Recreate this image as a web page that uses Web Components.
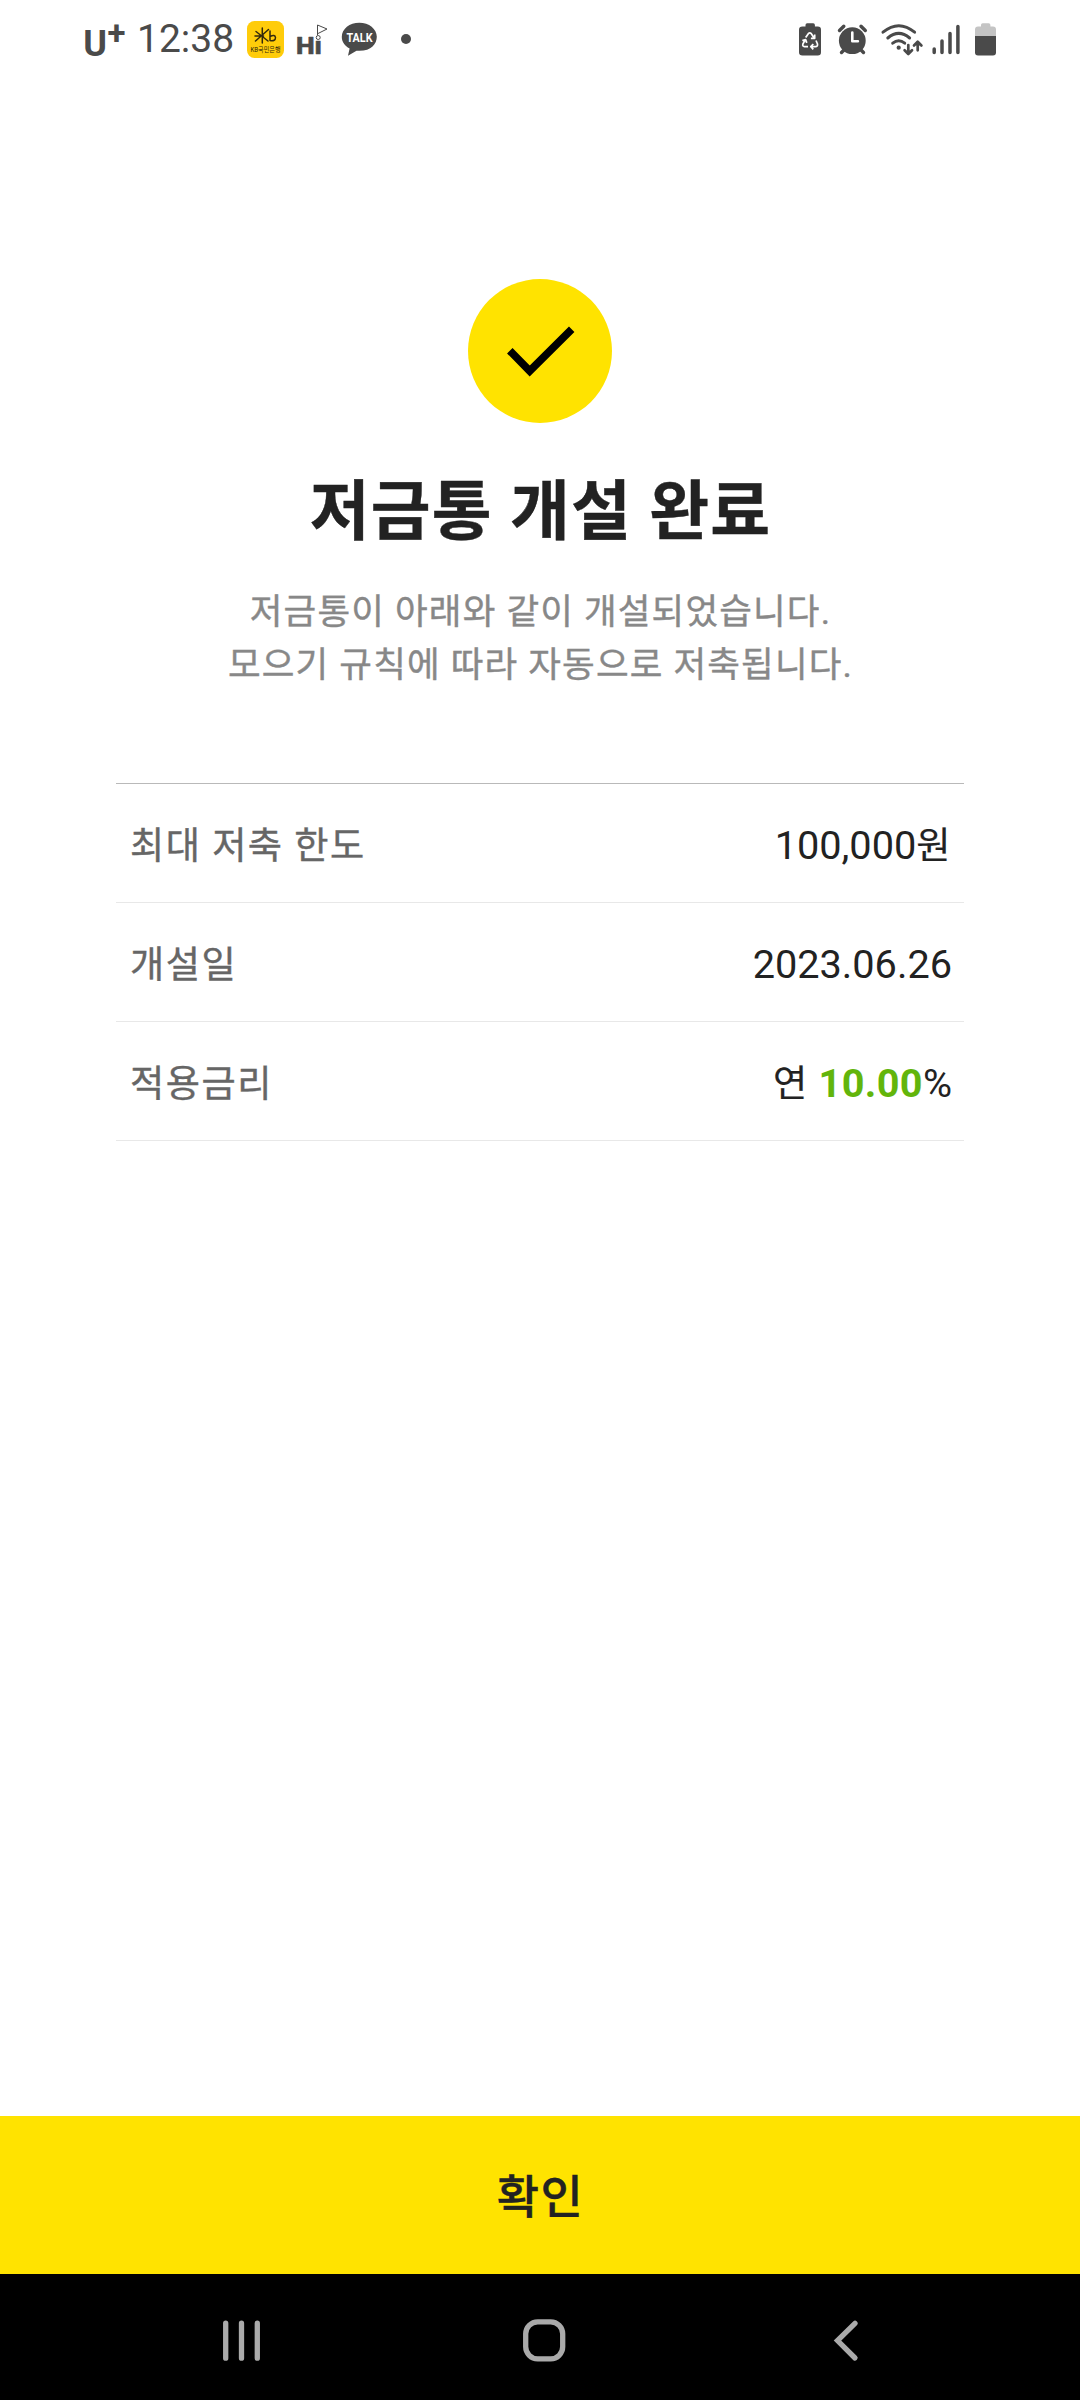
<!DOCTYPE html>
<html lang="ko">
<head>
<meta charset="utf-8">
<title>저금통 개설 완료</title>
<style>
html,body{margin:0;padding:0;background:#fff}
body{font-family:Roboto,"Noto Sans CJK KR",sans-serif;color:#222}
</style>
</head>
<body>
<app-screen>
  <status-bar slot="status"></status-bar>
  <result-hero>
    <span slot="title">저금통 개설 완료</span>
    <span slot="line1">저금통이 아래와 같이 개설되었습니다.</span>
    <span slot="line2">모으기 규칙에 따라 자동으로 저축됩니다.</span>
  </result-hero>
  <detail-list>
    <detail-row label="최대 저축 한도">100,000<unit-text>원</unit-text></detail-row>
    <detail-row label="개설일">2023.06.26</detail-row>
    <detail-row label="적용금리"><unit-text>연</unit-text> <rate-value>10.00</rate-value>%</detail-row>
  </detail-list>
  <confirm-button slot="footer">확인</confirm-button>
  <nav-bar slot="footer"></nav-bar>
</app-screen>
<script>
function define(name, html){
  const t=document.createElement('template');
  t.innerHTML=html;
  customElements.define(name, class extends HTMLElement{
    constructor(){
      super();
      this.attachShadow({mode:'open'}).append(t.content.cloneNode(true));
    }
    connectedCallback(){
      const l=this.shadowRoot.querySelector('.label');
      if(l) l.textContent=this.getAttribute('label');
    }
  });
}

define('app-screen', `<style>
:host{display:flex;flex-direction:column;width:1080px;height:2400px;background:#fff;overflow:hidden}
main{flex:1}
footer{display:flex;flex-direction:column}
</style><slot name="status"></slot><main><slot></slot></main><footer><slot name="footer"></slot></footer>`);

define('status-bar', `<style>
:host{display:flex;justify-content:space-between;height:80px;padding:0 82px 0 82px;box-sizing:border-box;color:#4a4a4a}
div{display:flex;align-items:flex-start}
svg{display:block;flex:none;overflow:visible}
.time{width:97px;margin:0 10px 0 11px;font-size:39px;line-height:46px;padding-top:16px;white-space:nowrap}
</style>
<div>
<svg width="44" height="80" viewBox="82 0 44 80"><g fill="#4a4a4a" font-family="Roboto" font-weight="700"><text x="83.200" y="55.500" font-size="36">U</text><text x="107.500" y="43.500" font-size="33">+</text></g></svg>
<span class="time">12:38</span>
<svg width="50" height="80" viewBox="244 0 50 80"><rect x="247" y="21" width="37" height="37" rx="7.500" fill="#ffcc0a"/>
<g fill="none" stroke="#33290c" stroke-width="1.500" stroke-linecap="round"><path d="M262.300 28v15M256 31.500l12 9.500M268.500 29.500l-13 11.500M255 36h8.500M270 31v9.500M270 36.500q5-2.500 5.500 1q0 4-5.500 3"/></g>
<text x="250.500" y="52" font-size="6.500" textLength="30" lengthAdjust="spacingAndGlyphs" fill="#33290c" font-weight="400" font-family="Roboto,'Noto Sans CJK KR'">KB국민은행</text></svg>
<svg width="44" height="80" viewBox="294 0 44 80"><text x="296" y="53.500" font-size="24.500" textLength="26" lengthAdjust="spacingAndGlyphs" font-family="Roboto" font-weight="800" fill="#4a4a4a" stroke="#4a4a4a" stroke-width=".6" stroke-linejoin="round">Hı</text><circle cx="318.200" cy="37.500" r="2" fill="#fff" stroke="#4a4a4a"/><path d="M317.500 35V25l9.500 4-9 4.500" fill="none" stroke="#4a4a4a" stroke-width="1"/></svg>
<svg width="80" height="80" viewBox="338 0 80 80"><path d="M359.300 22.700c-9.700 0-17.500 6.200-17.500 14 0 5.200 3 9.200 7.800 11.800L348 55.700l8.500-5c14 1.200 20.300-6.500 20.300-14 0-7.800-7.800-14-17.500-14z" fill="#4a4a4a"/><text x="346.500" y="41.800" font-size="12.800" font-weight="700" textLength="26" lengthAdjust="spacingAndGlyphs" font-family="Roboto" fill="#fff">TALK</text><circle cx="406" cy="39" r="5" fill="#4a4a4a"/></svg>
</div>
<div class="right">
<svg width="38" height="80" viewBox="796 0 38 80"><path d="M802.500 26.500h3v-1.500q0-1.700 1.700-1.700h6q1.700 0 1.700 1.700v1.500h2.900q3.200 0 3.200 3.200v22.600q0 3.200-3.200 3.200h-15.300q-3.500 0-3.500-3.200v-22.600q0-3.200 3.500-3.200z" fill="#4a4a4a"/><g fill="none" stroke="#fff" stroke-width="1.700" stroke-linejoin="round"><path d="M805.700 37.500l2.600-3.800q1.500-1.500 3 0l2.800 4.300M814.700 34.500v3.800h-3.800M816 40.500l1.500 3.500q.3 2.500-2 2.700h-4M813.300 44l-2.500 2.700 2.500 2.700M808 46.700h-3.500q-2.300-.3-1.600-2.700l2.400-4.300M802.300 40.500l3.300-.9 1.200 3.300"/></g></svg>
<svg width="44" height="80" viewBox="834 0 44 80"><circle cx="852.300" cy="40.700" r="13.400" fill="#4a4a4a"/><g fill="none" stroke="#4a4a4a" stroke-width="3.400" stroke-linecap="round"><path d="M839.500 30.500l4.300-4.300M861 26.200l4.300 4.300M844 50l-2.500 2.500M861 50l2.500 2.500"/></g><path d="M852.300 32.500v8.700h5.600" fill="none" stroke="#fff" stroke-width="2.600" stroke-linecap="round" stroke-linejoin="round"/></svg>
<svg width="50" height="80" viewBox="878 0 50 80"><g fill="none" stroke="#4a4a4a" stroke-width="3" stroke-linecap="round"><path d="M883 32.200q15.800-13 31.600 0M887.800 38q10.900-9.200 21.800 0M892.700 43.200q6-4.800 12 0"/><path d="M908.300 45v8.700M904.600 50.300l3.700 3.700 3.700-3.700M917.700 50.300v-8M914 45.500l3.700-3.700 3.700 3.700" stroke-width="2.700" stroke-linejoin="round"/></g><circle cx="898.700" cy="47.700" r="2.100" fill="#4a4a4a"/></svg>
<svg width="40" height="80" viewBox="928 0 40 80"><path d="M934.200 49v3.500M942 41v11.500M950 33.500v19M957.900 26.500v26" stroke="#4a4a4a" stroke-width="3.500" stroke-linecap="round"/></svg>
<svg width="30" height="80" viewBox="968 0 30 80"><path d="M975 36v-6.500q0-3 3-3h3v-1.500q0-1.700 1.700-1.700h6q1.700 0 1.700 1.700v1.500h2.600q3 0 3 3v6.500z" fill="#c4c4c4"/><path d="M975 36h21v16.500q0 3-3 3h-15q-3 0-3-3z" fill="#4a4a4a"/></svg>
</div>`);

define('result-hero', `<style>
:host{display:flex;flex-direction:column;align-items:center;padding-top:199px;height:504px;text-align:center}
svg{display:block;flex:none}
h1{margin:40px 0 0;padding-left:1px;font-size:65px;line-height:98px;letter-spacing:1.200px;font-weight:700;color:#222;-webkit-text-stroke:.4px #222;white-space:nowrap}
p{margin:25px 0 0;padding-left:1px;font-size:35.500px;letter-spacing:1.150px;line-height:53px;color:#888;-webkit-text-stroke:.4px #888;white-space:nowrap}
p span{display:block}
</style>
<svg width="144" height="144" viewBox="468 279 144 144"><circle cx="540" cy="351" r="72" fill="#ffe300"/><path d="M509.800 350.700l19.900 20.300 42-41.700" fill="none" stroke="#000" stroke-width="7.700"/></svg>
<h1><slot name="title"></slot></h1>
<p><span><slot name="line1"></slot></span><span><slot name="line2"></slot></span></p>`);

define('detail-list', `<style>
:host{display:flex;flex-direction:column;margin:0 116px;border-top:1px solid #b9b9b9}
</style><slot></slot>`);

define('detail-row', `<style>
:host{display:flex;justify-content:space-between;align-items:baseline;box-sizing:border-box;height:119px;padding:36px 12px 0 14px;border-bottom:1px solid #e8e8e8;font-size:39.700px;line-height:52px;white-space:nowrap}
.label{color:#666;font-size:37.200px;letter-spacing:1.500px;-webkit-text-stroke:.4px #666}
.value{color:#222}
</style><span class="label"></span><span class="value"><slot></slot></span>`);

define('rate-value', `<style>:host{display:inline;font-weight:700;letter-spacing:.350px;color:#62b50b}</style><slot></slot>`);

define('unit-text', `<style>:host{display:inline;font-size:37.200px;letter-spacing:1.500px;-webkit-text-stroke:.2px #222}</style><slot></slot>`);

define('confirm-button', `<style>
:host{display:block}
button{display:flex;align-items:center;justify-content:center;width:100%;height:158px;margin:0;padding:4px 0 0 1px;box-sizing:border-box;border:0;border-radius:0;background:#ffe300;color:#222;font:500 46px/64px Roboto,"Noto Sans CJK KR",sans-serif;letter-spacing:1.500px;-webkit-text-stroke:.4px #222}
</style><button><slot></slot></button>`);

define('nav-bar', `<style>
:host{display:flex;align-items:flex-start;height:126px;padding-left:220px;box-sizing:border-box;background:#000}
svg{display:block;flex:none}
.home{margin:0 259.500px 0 254.500px}
g{fill:none;stroke:#aaa;stroke-width:5.300;stroke-linecap:round;stroke-linejoin:round}
</style>
<svg width="44" height="126" viewBox="220 2274 44 126"><g><path d="M225.700 2323.200v35M241.500 2323.200v35M257.300 2323.200v35"/></g></svg>
<svg class="home" width="50" height="126" viewBox="518.500 2274 50 126"><g><rect x="525.200" y="2321.800" width="37" height="37" rx="12"/></g></svg>
<svg width="34" height="126" viewBox="828 2274 34 126"><g><path d="M855 2323.300l-17.500 17.300 17.500 17.400" style="stroke-linejoin:miter"/></g></svg>`);
</script>
</body>
</html>
